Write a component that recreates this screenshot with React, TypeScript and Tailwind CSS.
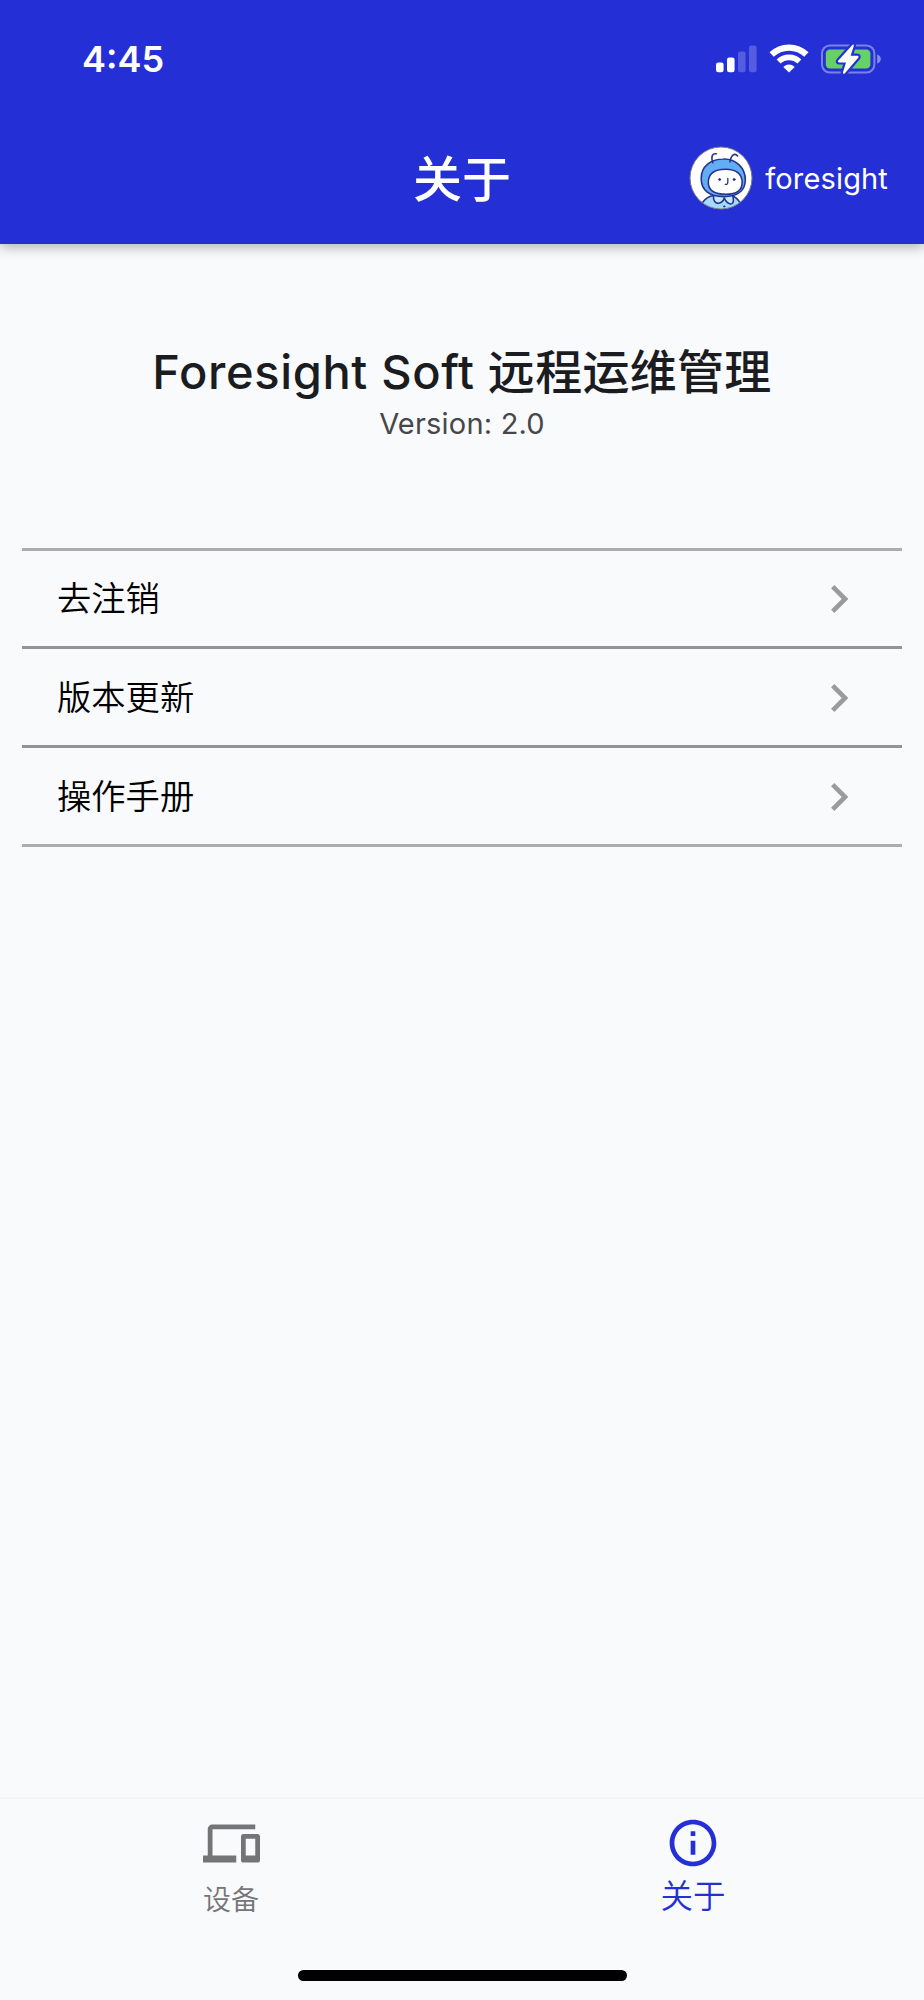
import React from "react";

const cjk = "font-['Inter','Noto_Sans_CJK_SC',sans-serif]";

function SignalIcon() {
  return (
    <svg width="42" height="28" viewBox="0 0 42 28" fill="#fff">
      <rect x="0" y="17.5" width="7.6" height="9.7" rx="2.2" />
      <rect x="11" y="12.5" width="7.6" height="14.7" rx="2.2" />
      <rect x="22" y="6.5" width="7.6" height="20.7" rx="2.2" opacity=".22" />
      <rect x="33" y="0.5" width="7.6" height="26.7" rx="2.2" opacity=".22" />
    </svg>
  );
}

function WifiIcon() {
  return (
    <svg width="40" height="30" viewBox="0 0 40 30" fill="none" stroke="#fff">
      <path d="M2.6 10.6A25 25 0 0 1 37.4 10.6" strokeWidth="6.2" />
      <path d="M9.6 17.6A15 15 0 0 1 30.4 17.6" strokeWidth="5.6" />
      <path d="M20 28.6L14.3 22.9Q20 18.2 25.7 22.9Z" fill="#fff" stroke="none" />
    </svg>
  );
}

function BatteryIcon() {
  return (
    <svg width="61" height="32" viewBox="0 0 61 32">
      <rect x="1" y="2.4" width="52.4" height="27.2" rx="8" fill="none" stroke="#fff" strokeOpacity=".4" strokeWidth="2" />
      <path d="M56.2 11.4Q59.8 12.6 59.8 16T56.2 20.6Z" fill="#fff" fillOpacity=".45" />
      <rect x="4.8" y="6.4" width="44.6" height="19.2" rx="4.2" fill="#66d265" />
      <path
        d="M31.6 1.7L17.3 17.6Q16.3 19.4 18.2 19.4H25L21.9 29.4Q21.9 31.3 23.7 30.6L37.2 14.8Q38.2 12.9 36.2 12.8H29.6L32.8 3Q33 1.1 31.6 1.7Z"
        fill="#fff"
        stroke="#2430d6"
        strokeWidth="4.4"
        paintOrder="stroke"
      />
    </svg>
  );
}

function Avatar() {
  return (
    <svg width="64" height="64" viewBox="0 0 64 64">
      <defs>
        <clipPath id="face-clip">
          <circle cx="32" cy="32" r="31" />
        </clipPath>
      </defs>
      <circle cx="32" cy="32" r="31" fill="#fff" />
      <g clipPath="url(#face-clip)" stroke="#25328f" strokeWidth="1.6" strokeLinecap="round" strokeLinejoin="round">
        <path d="M13.5 56.5Q18 50.2 25 49.5H42Q48 51 51 57V66H13Z" fill="#a5dafb" />
        <path d="M24.5 49C24 55 26.5 57.7 29.5 57.3C32 57 34.5 54.5 35.3 52C36.5 55.5 40 59 43 57.6C45 56.5 44.5 52.5 43.5 49Z" fill="#c6e8fd" />
        <path d="M34.2 13C47 12.5 56.5 22 56.3 34C56.2 45 48 50.6 35 50.6C20 50.6 12.2 44 12.2 32.5C12.2 20 22 13.2 34.2 13Z" fill="#63adf4" />
        <path d="M36.5 23.3C47 23.2 53.2 28 53.2 36.5C53.2 44.5 48 48.3 37 48.3C25 48.3 19.3 44.5 19.3 36.5C19.3 28 25.5 23.4 36.5 23.3Z" fill="#fff" />
        <path d="M23.8 16.8C21.8 10.5 23.2 7.2 27.2 7.8M41 16C41.8 9 45.5 6.4 48.6 9.9" fill="none" />
        <path d="M38.8 32.5V36.2Q38.8 38.6 36.3 38.3" fill="none" strokeWidth="1.3" />
        <circle cx="30.6" cy="33.5" r="1" fill="#25328f" strokeWidth=".9" />
        <circle cx="45.1" cy="33.5" r="1" fill="#25328f" strokeWidth=".9" />
        <circle cx="35.2" cy="60.4" r=".7" fill="#25328f" strokeWidth=".8" />
      </g>
      <circle cx="32" cy="32" r="31" fill="none" stroke="#777a88" strokeWidth="1" />
    </svg>
  );
}

function ListRow({ label, size }: { label: string; size: string }) {
  return (
    <div className={`flex items-center justify-between border-b-[3px] px-[35px] ${size}`}>
      <span className="pt-px text-[34.3px] leading-none font-[350] text-black">{label}</span>
      <svg width="56" height="56" viewBox="0 0 24 24" fill="#9b9b9d">
        <path d="M10 6L8.59 7.41 13.17 12l-4.58 4.59L10 18l6-6z" />
      </svg>
    </div>
  );
}

export default function App() {
  return (
    <div className={`flex h-[2000px] w-[924px] flex-col bg-[#f9fafc] ${cjk}`}>
      <header className="z-10 h-[244px] shrink-0 bg-[#2430d6] shadow-[0_3px_12px_rgba(0,0,0,0.3)]">
        <div className="flex h-[114px] items-center justify-between pt-1 pr-[42px] pl-[82px]">
          <span className="text-[36px] font-semibold text-white">4:45</span>
          <div className="flex items-center">
            <SignalIcon />
            <div className="ml-[11px]"><WifiIcon /></div>
            <div className="ml-[12px]"><BatteryIcon /></div>
          </div>
        </div>
        <div className="grid h-[128px] grid-cols-[1fr_auto_1fr] items-center">
          <div />
          <h1 className="pt-[3px] text-[49px] leading-none font-medium text-white">关于</h1>
          <div className="flex items-center justify-end gap-[12px] pr-[36px]">
            <Avatar />
            <span className="text-[29px] leading-none tracking-[0.15px] text-white">foresight</span>
          </div>
        </div>
      </header>

      <main className="flex flex-1 flex-col">
        <div className="flex h-[304px] flex-col items-center pt-[100px]">
          <h2 className="text-[47px] leading-[56px] font-medium tracking-[0.3px] whitespace-nowrap text-[#1b1c1f]">
            <span className="font-[450] tracking-[0.65px]">Foresight Soft </span>远程运维管理
          </h2>
          <p className="mt-[2px] text-[29px] leading-[44px] tracking-[0.2px] text-[#45474b]">Version: 2.0</p>
        </div>
        <div className="mx-[22px] border-t-[3px] border-[#acadaf]">
          <ListRow label="去注销" size="h-[98px] border-[#939496]" />
          <ListRow label="版本更新" size="h-[99px] pt-[2px] border-[#939496]" />
          <ListRow label="操作手册" size="h-[99px] pt-px border-[#acadaf]" />
        </div>
      </main>

      <nav className="flex h-[203px] shrink-0 flex-col border-t-2 border-[#f3f4f6]">
        <div className="grid h-[171px] grid-cols-2">
          <div className="flex flex-col items-center pt-[16px] text-[#757577]">
            <svg width="57" height="57" viewBox="0 0 24 24" fill="currentColor">
              <path d="M4 6h18V4H4c-1.1 0-2 .9-2 2v11H0v3h14v-3H4V6zm19 2h-6c-.55 0-1 .45-1 1v10c0 .55.45 1 1 1h6c.55 0 1-.45 1-1V9c0-.55-.45-1-1-1zm-1 9h-4v-7h4v7z" />
            </svg>
            <span className="mt-[14px] text-[28px] leading-[28px] font-[350]">设备</span>
          </div>
          <div className="flex flex-col items-center pt-[16px] text-[#2430d6]">
            <svg width="56" height="56" viewBox="0 0 24 24" fill="currentColor">
              <path d="M11 7h2v2h-2zm0 4h2v6h-2zm1-9C6.48 2 2 6.48 2 12s4.48 10 10 10 10-4.48 10-10S17.52 2 12 2zm0 18c-4.41 0-8-3.59-8-8s3.59-8 8-8 8 3.59 8 8-3.59 8-8 8z" />
            </svg>
            <span className="mt-[10px] text-[32.5px] leading-[32px] font-[350]">关于</span>
          </div>
        </div>
        <div className="mx-auto h-[11px] w-[329px] rounded-full bg-black" />
      </nav>
    </div>
  );
}
